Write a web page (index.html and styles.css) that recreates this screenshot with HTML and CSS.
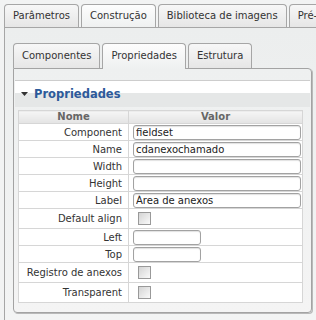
FILE: index.html
```html
<!DOCTYPE html>
<html lang="pt">
<head>
  <meta charset="UTF-8">
  <title>Construção - Propriedades</title>
  <link rel="stylesheet" href="styles.css">
</head>
<body>

<div class="tabs">
  <div class="tab">Parâmetros</div>
  <div class="tab active">Construção</div>
  <div class="tab">Biblioteca de imagens</div>
  <div class="tab">Pré-visualização</div>
</div>

<div class="panel">
  <div class="tabs sub">
    <div class="tab">Componentes</div>
    <div class="tab active">Propriedades</div>
    <div class="tab">Estrutura</div>
  </div>

  <div class="box">
    <div class="box-head">
      <svg class="arrow" width="7" height="4" viewBox="0 0 7 4"><polygon points="0,0 7,0 3.5,4" fill="#333"/></svg>
      Propriedades
    </div>

    <table class="props">
      <tr><th class="name">Nome</th><th>Valor</th></tr>
      <tr><td class="name">Component</td><td><input class="field" type="text" value="fieldset"></td></tr>
      <tr><td class="name">Name</td><td><input class="field" type="text" value="cdanexochamado"></td></tr>
      <tr><td class="name">Width</td><td><input class="field" type="text"></td></tr>
      <tr><td class="name">Height</td><td><input class="field" type="text"></td></tr>
      <tr><td class="name">Label</td><td><input class="field" type="text" value="Área de anexos"></td></tr>
      <tr class="check-row"><td class="name">Default align</td><td><input class="check" type="checkbox"></td></tr>
      <tr><td class="name">Left</td><td><input class="field short" type="text"></td></tr>
      <tr><td class="name">Top</td><td><input class="field short" type="text"></td></tr>
      <tr class="check-row"><td class="name">Registro de anexos</td><td><input class="check" type="checkbox"></td></tr>
      <tr class="check-row"><td class="name">Transparent</td><td><input class="check" type="checkbox"></td></tr>
    </table>
  </div>
</div>

</body>
</html>
```

FILE: styles.css
```css
html, body {
  margin: 0;
  overflow: hidden;
}
body {
  width: 316px;
  height: 320px;
  font-family: "DejaVu Sans", Verdana, sans-serif;
  font-size: 10px;
  color: #333;
  background: #f2f3f3;
}

/* tabs */
.tabs {
  display: flex;
  gap: 2px;
  padding: 4px 0 0 4px;
  white-space: nowrap;
  overflow: hidden;
}
.tab {
  flex: none;
  height: 22px;
  line-height: 22px;
  padding: 0 8px;
  border: 1px solid #a6a6a6;
  border-bottom: none;
  border-radius: 4px 4px 0 0;
  background: linear-gradient(#f7f7f7, #e6e6e6);
}
.tab.active {
  position: relative;
  z-index: 1;
  height: 23px;
  margin-bottom: -1px;
  background: linear-gradient(#fdfdfd, #eef0f0);
}
.tabs.sub {
  padding: 0;
  overflow: visible;
}
.tabs.sub .tab {
  height: 24px;
  line-height: 24px;
}
.tabs.sub .tab.active {
  height: 25px;
}

/* outer panel */
.panel {
  min-height: 277px;
  margin-left: 4px;
  padding: 15px 0 0 8px;
  border-top: 1px solid #a6a6a6;
  border-left: 1px solid #a6a6a6;
  background: linear-gradient(#eceeee, #f3f4f4);
}

/* properties box */
.box {
  width: 297px;
  padding: 11px 0 9px;
  border: 1px solid #a3a3a3;
  border-radius: 0 4px 4px 4px;
  box-shadow: 1px 1px 0 #b9b9b9;
  background: linear-gradient(#eef0f0, #f4f4f4);
}
.box-head {
  height: 26px;
  line-height: 26px;
  margin: 0 1px;
  padding-left: 6px;
  border-top: 1px solid #cdcdcd;
  background: linear-gradient(#fff 0, #fff 46%, #e5e7e7 46%, #e5e7e7 100%);
  color: #2d5a9a;
  font-size: 11.5px;
  font-weight: bold;
}
.arrow {
  margin-right: 2px;
  vertical-align: 2px;
}

/* properties table */
.props {
  width: 285px;
  margin: 3px 0 0 4px;
  border-collapse: collapse;
  background: #fff;
  border: 1px solid #c4c4c4;
}
.props th,
.props td {
  padding: 0 0 0 4px;
  border: 1px solid #d6d6d6;
}
.props th {
  height: 12px;
  line-height: 12px;
  padding: 0;
  color: #666;
  font-weight: bold;
  background: linear-gradient(#f5f5f5, #e3e3e3);
}
.props td {
  height: 16px;
}
.props .check-row td {
  height: 19px;
}
.props .name {
  width: 103px;
  padding: 0 6px 0 0;
  text-align: right;
}
.props th.name {
  text-align: center;
  padding: 0;
}

.field {
  display: block;
  box-sizing: border-box;
  width: 168px;
  height: 15px;
  margin: 0;
  padding: 0 2px;
  border: 1px solid #a2a2a2;
  border-radius: 3px;
  box-shadow: inset 0 1px 1px rgba(0,0,0,0.12);
  background: #fff;
  font-family: inherit;
  font-size: 10px;
  color: #222;
}
.field.short {
  width: 68px;
}
.check {
  display: block;
  -webkit-appearance: none;
  appearance: none;
  width: 13px;
  height: 13px;
  margin: 0 0 0 5px;
  border: 1px solid #999;
  background: linear-gradient(135deg, #d4d4d4, #fafafa);
}
```
